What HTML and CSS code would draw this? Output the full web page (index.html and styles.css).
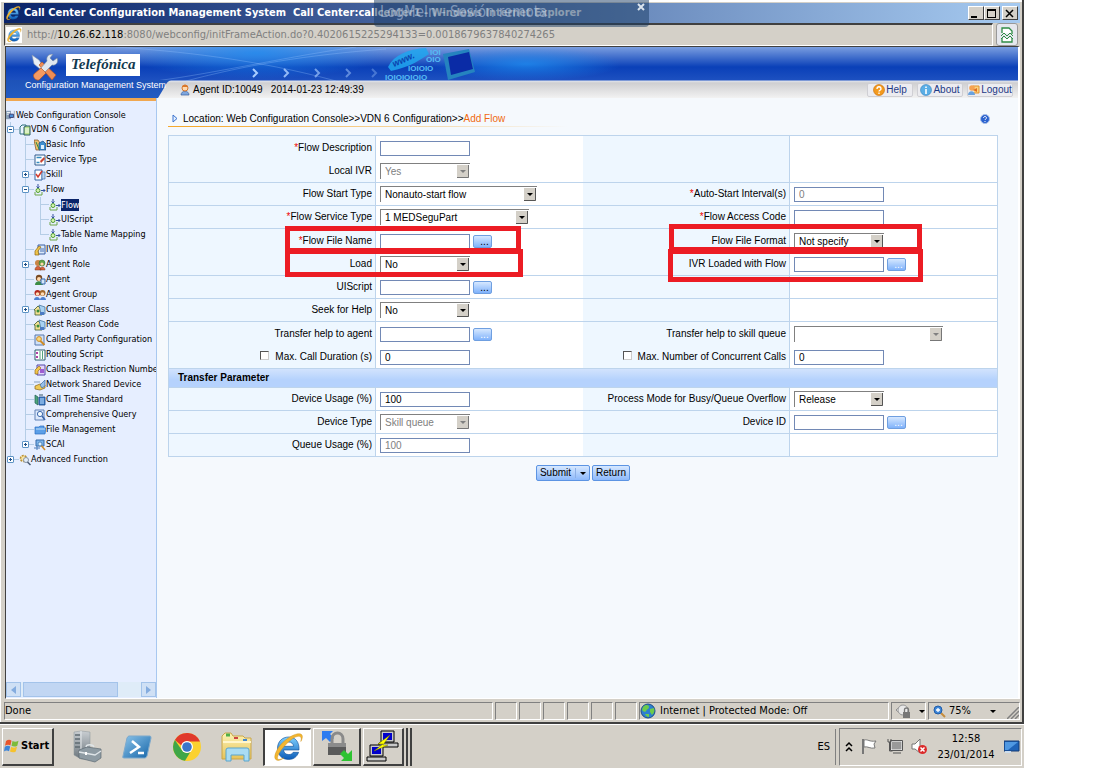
FILE: index.html
```html
<!DOCTYPE html>
<html lang="en">
<head>
<meta charset="utf-8">
<title>Call Center Configuration Management System</title>
<link rel="stylesheet" href="styles.css">
</head>
<body>
<svg class="defs" aria-hidden="true">
  <defs>
    <linearGradient id="gBlue" x1="0" y1="0" x2="0" y2="1"><stop offset="0" stop-color="#7fd0ff"/><stop offset="1" stop-color="#0b5cb8"/></linearGradient>
    <linearGradient id="gYellow" x1="0" y1="0" x2="0" y2="1"><stop offset="0" stop-color="#fdf3b4"/><stop offset="1" stop-color="#e6c35a"/></linearGradient>
    <linearGradient id="gPs" x1="0" y1="0" x2="1" y2="1"><stop offset="0" stop-color="#8cc4ea"/><stop offset="1" stop-color="#1565a8"/></linearGradient>
    <linearGradient id="gGrey" x1="0" y1="0" x2="0" y2="1"><stop offset="0" stop-color="#c9ced2"/><stop offset="1" stop-color="#6b757c"/></linearGradient>
  </defs>
  <symbol id="ie" viewBox="0 0 32 32"><path d="M27 19H11.500c.4 3 2.500 4.600 5.300 4.600 2 0 3.500-.8 4.400-2.300h5.400C25 26 21.400 28.500 16.600 28.500 10 28.500 5.500 24 5.500 17.300S10.200 6 16.700 6 27.400 10.600 27 19zM11.600 15.300h10c-.4-2.700-2.200-4.300-4.900-4.300s-4.600 1.600-5.100 4.300z" fill="url(#gBlue)" stroke="#0a4a94" stroke-width=".6"/><path d="M4.500 29C0 27 5 16 13 9.500 20 3.500 28 1 30 4c1 1.700 0 4.500-1.200 6.500.6-2.500.7-4.300-.8-5-3-1.300-9 2.500-14 8C7.500 20 4 27 6 28.200c1.300.7 3.500 0 6-1.400C9 29 6.300 30 4.500 29z" fill="#f2b632" stroke="#c98a12" stroke-width=".4"/></symbol>
  <symbol id="t-site" viewBox="0 0 12 12"><path d="M0 1h6v10H0z" fill="#8aa0b8"/><path d="M1 3h4M1 5h4" stroke="#fff"/><path d="M4 5h5v4H4z" fill="#4d8fd6" stroke="#336"/><path d="M10 1v9" stroke="#9ab"/></symbol>
  <symbol id="t-vdn" viewBox="0 0 12 12"><path d="M1 3l2-2h4v9H1z" fill="#e9f4ff" stroke="#2d6f7c"/><path d="M5 3l2-1h4v9H5z" fill="#b8e08a" stroke="#2c5a66"/><path d="M7 4v5M9 4v5" stroke="#fff"/></symbol>
  <symbol id="t-basic" viewBox="0 0 12 12"><path d="M0 1h4l2 3v7H2z" fill="#eec06b" stroke="#7d4d22" stroke-width=".7"/><path d="M5 4l4-2 3 3v6H5z" fill="#3f8fcf" stroke="#174b7c" stroke-width=".7"/><path d="M2 3l3 7" stroke="#2c8b48"/><path d="M7 6h3v4H7z" fill="#dff2ff"/></symbol>
  <symbol id="t-service" viewBox="0 0 12 12"><path d="M1 1h10v10H1z" fill="#fff" stroke="#2e5b8e"/><path d="M2.500 3.500h5M2.500 8.500h3" stroke="#358bc0" stroke-width="1.500"/><path d="M6 7l4-4 1 2-4 4z" fill="#c84432"/></symbol>
  <symbol id="t-skill" viewBox="0 0 12 12"><path d="M1 1h7v10H1z" fill="#fff" stroke="#3465a4"/><path d="M8 3h3v7H8z" fill="#bcd4ee" stroke="#3465a4" stroke-width=".6"/><path d="M2 5l2 3 4-6" stroke="#d13c2e" stroke-width="1.500" fill="none"/></symbol>
  <symbol id="t-flow" viewBox="0 0 12 12"><path d="M4 0v4M2.500 2.500L4 4l1.500-1.500M7 6.500h4M9.500 5l1.500 1.500L9.500 8" stroke="#34519e" fill="none"/><circle cx="4" cy="6.500" r="2" fill="#d7f3b0" stroke="#4f9b32"/><path d="M1 8v3h7V8" fill="none" stroke="#6da548"/></symbol>
  <symbol id="t-ivr" viewBox="0 0 12 12"><path d="M4 1h7v9H4z" fill="#dbe9fa" stroke="#3a5fa3"/><path d="M1 11V7l4-5 2 1-3 4 1 4z" fill="#f0c54b" stroke="#8d6516" stroke-width=".7"/><path d="M6 5h4M6 7h4" stroke="#4a70b4"/></symbol>
  <symbol id="t-role" viewBox="0 0 12 12"><circle cx="4" cy="4" r="3" fill="#c98546"/><circle cx="8" cy="4" r="3" fill="#62a347" stroke="#37662a" stroke-width=".5"/><circle cx="8" cy="5" r="1.600" fill="#ffd8ad"/><path d="M1 11c0-5 6-5 6 0zM6 11c0-4 5-4 5 0z" fill="#d9613c" stroke="#7d3a1f" stroke-width=".5"/></symbol>
  <symbol id="t-agent" viewBox="0 0 12 12"><circle cx="5" cy="4" r="3.200" fill="#7a4a23"/><circle cx="5" cy="5" r="2" fill="#ffd8ad"/><path d="M1 11c0-5 7-5 8 0z" fill="#3d8d45"/><path d="M7 5h4v5H7z" fill="#d4e6fa" stroke="#3568ad"/></symbol>
  <symbol id="t-group" viewBox="0 0 12 12"><circle cx="3.500" cy="4" r="3" fill="#b2271f"/><circle cx="8.500" cy="4" r="3" fill="#a5682b"/><circle cx="3.500" cy="5" r="1.800" fill="#ffdcb6"/><circle cx="8.500" cy="5" r="1.800" fill="#ffdcb6"/><path d="M0 11c0-4 6-4 6 0zM6 11c0-4 6-4 6 0z" fill="#4c7fd2"/></symbol>
  <symbol id="t-cust" viewBox="0 0 12 12"><path d="M0 6l4-4 4 4v5H1V6z" fill="#f2df91" stroke="#3d5a2d" stroke-width=".8"/><path d="M5 1l6 2v7H7z" fill="#a9d2f2" stroke="#386894" stroke-width=".7"/><circle cx="4" cy="7" r="1.500" fill="#3a8d3c"/><path d="M6 8h4v3H6z" fill="#4b7ac4"/></symbol>
  <symbol id="t-party" viewBox="0 0 12 12"><path d="M1 1h9v10H1z" fill="#cfe1f8" stroke="#5979ad"/><path d="M10.500 11L6 6.500" stroke="#cf8b26" stroke-width="2"/><circle cx="5" cy="5" r="2.400" fill="#f9d97c" stroke="#cf8b26"/></symbol>
  <symbol id="t-routing" viewBox="0 0 12 12"><path d="M1 1h10v10H1z" fill="#fff" stroke="#2f5f6f"/><path d="M3 3v2M3 7v2" stroke="#b440a5" stroke-width="2"/><path d="M6 2v8M8.500 2v8" stroke="#56a27d"/></symbol>
  <symbol id="t-callback" viewBox="0 0 12 12"><path d="M3 1h8v10H3z" fill="#e3d5fa" stroke="#5448a8"/><path d="M1 10V6l4-4 2 2-3 3v3z" fill="#f3c64a" stroke="#856017" stroke-width=".6"/><path d="M6 6h4M6 8h4" stroke="#8936c4" stroke-width="1.500"/></symbol>
  <symbol id="t-network" viewBox="0 0 12 12"><path d="M1 7l5-2 5 1v3l-5 2-5-1z" fill="#f0c955" stroke="#8b6518" stroke-width=".7"/><path d="M6 6l5-5v6L8 9z" fill="#98c1ea" stroke="#3f6ba3" stroke-width=".7"/><path d="M0 3h6" stroke="#87a0bf"/></symbol>
  <symbol id="t-time" viewBox="0 0 12 12"><path d="M1 1l3 2v8l-3-2z" fill="#4fa67d" stroke="#1c5e52" stroke-width=".7"/><path d="M5 3h6v8H5z" fill="#3f83ce" stroke="#1b4583" stroke-width=".8"/><path d="M6 5h4M6 7h4M6 9h4" stroke="#dceeff" stroke-width=".8"/><path d="M5 1h4" stroke="#356"/></symbol>
  <symbol id="t-query" viewBox="0 0 12 12"><path d="M1 1h9v10H1z" fill="#dce8fb" stroke="#6181b5"/><circle cx="6" cy="5" r="2.600" fill="#f4fbff" stroke="#3e68ab"/><path d="M8 7l3 4" stroke="#3e68ab" stroke-width="1.500"/></symbol>
  <symbol id="t-folder" viewBox="0 0 12 12"><path d="M1 3h4l1-1h4v2h2l-1 6H1z" fill="#5b9fe8" stroke="#2b6ebf" stroke-width=".7"/><path d="M2 5h9" stroke="#c5e1fb"/></symbol>
  <symbol id="t-scai" viewBox="0 0 12 12"><path d="M2 1h8v6H2z" fill="#7db4ea" stroke="#376ba8"/><path d="M0 9h6M3 7v4" stroke="#4a7dba"/><path d="M6 5l5 6" stroke="#cf8b2c" stroke-width="1.500"/><circle cx="6" cy="5" r="2" fill="#d7efff" stroke="#376ba8" stroke-width=".7"/></symbol>
  <symbol id="t-adv" viewBox="0 0 12 12"><circle cx="4.500" cy="4.500" r="3" fill="#fae6a5" stroke="#bb9136" stroke-width="1.500" stroke-dasharray="2 1"/><circle cx="7" cy="6" r="2.500" fill="#e4edf8" stroke="#8593a6"/><path d="M8.500 8l3 3" stroke="#4a5b73" stroke-width="1.500"/></symbol>
</svg>

<div class="desktop">
  <section class="window">
    <div class="titlebar">
      <svg class="i16"><use href="#ie"/></svg>
      <h1 class="title">Call Center Configuration Management System&nbsp; Call Center:callcenter1 - Windows Internet Explorer</h1>
      <div class="winbtns">
        <button class="wb" aria-label="Minimize"><svg width="13" height="11"><path d="M2 8h6v2H2z"/></svg></button>
        <button class="wb" aria-label="Maximize"><svg width="13" height="11"><path d="M2 1h9v9H2zM3 3v6h7V3z" fill-rule="evenodd"/></svg></button>
        <button class="wb close" aria-label="Close"><svg width="13" height="11"><path d="M3 2l7 7M10 2L3 9" stroke="#000" stroke-width="1.500"/></svg></button>
      </div>
      <div class="remote"><span>LogMeIn - Sesión remota</span><button class="remote-x" aria-label="Close session bar"><svg width="8" height="8"><path d="M1 1l6 6M7 1L1 7" stroke="#dbe4ee" stroke-width="2"/></svg></button></div>
    </div>
    <div class="address">
      <div class="url"><svg class="i16 page-ic"><use href="#ie"/></svg><span>http://<b>10.26.62.118</b>:8080/webconfig/initFrameAction.do?0.4020615225294133=0.0018679637840274265</span></div>
      <button class="compat" aria-label="Compatibility view"><svg width="14" height="16" viewBox="0 0 14 16"><path d="M2 6V1h7l3 3v3M2 11v4h10v-4" fill="#fff" stroke="#2f8c46" stroke-width="1.300"/><path d="M1 9l3-3 3 3 3-3 3 3M1 12l3-3 3 3 3-3 3 3" fill="none" stroke="#2f8c46"/></svg></button>
    </div>

    <div class="frame">
      <header class="top">
        <svg class="art" width="620" height="51" viewBox="0 0 620 51" aria-hidden="true">
          <defs>
            <radialGradient id="glow"><stop offset="0" stop-color="#1f8cf0" stop-opacity=".8"/><stop offset="1" stop-color="#1f8cf0" stop-opacity="0"/></radialGradient>
            <linearGradient id="side" x1="0" y1="0" x2="0" y2="1"><stop offset="0" stop-color="#1d52b8"/><stop offset="1" stop-color="#245cc2"/></linearGradient>
          </defs>
          <ellipse cx="520" cy="17" rx="95" ry="17" fill="url(#glow)"/>
          <ellipse cx="250" cy="6" rx="130" ry="26" fill="url(#glow)"/>
          <path d="M110 0C170 4 250 12 330 34M150 34C210 26 290 8 350 0M180 34C240 18 300 8 380 2" stroke="#9cc8ff" stroke-opacity=".3" fill="none"/>
          <path d="M0 33h165q-4 1-7 8l-6 10H0z" fill="url(#side)"/>
          <g fill="none" stroke="#a9cdff" stroke-width="2"><path d="M247 22l4 4-4 4"/><path d="M278 22l4 4-4 4" opacity=".85"/><path d="M309 22l4 4-4 4" opacity=".65"/><path d="M340 22l4 4-4 4" opacity=".5"/><path d="M366 22l4 4-4 4" opacity=".35"/></g>
          <path d="M382 20C388 8 402 2 420 1l3 6c-8 5-18 13-38 17z" fill="#20a6ee" opacity=".85"/>
          <text x="388" y="20" class="art-www" transform="rotate(-24 388 20)">www.</text>
          <g class="art-bits"><text x="424" y="8">IOI</text><text x="420" y="15">OIO</text><text x="402" y="24">IOIOIO</text><text x="379" y="33">IOIOIOIOIO</text></g>
          <path d="M437 7l26-5 6 23-27 8z" fill="#2583bf"/><path d="M442 10l21-5 4 17-22 6z" fill="#0a2ba6"/>
        </svg>
        <div class="brand">
          <div class="brand-row">
            <svg width="29" height="27" viewBox="0 0 29 27"><path d="M2 1l7 5 4 6-3 3-6-5z" fill="#e8eef6" stroke="#8194ac" stroke-width=".6"/><path d="M9 11l3-3 14 13-4 5z" fill="#ef8d55" stroke="#b65425" stroke-width=".7"/><path d="M27 4l-4 3-3-3 3-4c-5 0-7 3-6 7l-7 8 4 4 8-8c4 1 7-3 5-7z" fill="#dfe7f0" stroke="#71869f" stroke-width=".6"/><path d="M11 14l5 5-7 7c-3 1-7-3-5-6z" fill="#f49a62" stroke="#b65425" stroke-width=".7"/></svg>
            <span class="logo">Telefónica</span>
          </div>
          <p class="brand-sub">Configuration Management System</p>
        </div>
        <div class="infobar">
          <svg width="10" height="12" viewBox="0 0 10 12"><path d="M1 11c0-5 8-5 8 0z" fill="#7ea6de" stroke="#3b62a0" stroke-width=".7"/><circle cx="5" cy="4" r="3" fill="#ffd9ad" stroke="#d9782a"/><path d="M2 3c1-3 5-3 6 0z" fill="#d9782a"/></svg>
          <span class="agent">Agent ID:10049&nbsp;&nbsp; 2014-01-23 12:49:39</span>
          <nav class="links">
            <a href="#help"><svg width="12" height="12"><circle cx="6" cy="6" r="5.500" fill="#f39a1e" stroke="#c76d08" stroke-width=".6"/><path d="M4 5c0-3 4-3 4 0 0 1.500-2 1-2 2.500M6 8.500V10" fill="none" stroke="#fff" stroke-width="1.300"/></svg>Help</a>
            <a href="#about"><svg width="12" height="12"><circle cx="6" cy="6" r="5.500" fill="#5aaee6" stroke="#3b84bd" stroke-width=".6"/><path d="M6 2.500v1.500M6 5v5" stroke="#fff" stroke-width="1.600"/></svg>About</a>
            <a href="#logout"><svg width="12" height="12"><path d="M5 2h6v7H6" fill="#fbd27c" stroke="#e3922c"/><circle cx="4" cy="4" r="2.800" fill="#f6a352"/><path d="M0 11c0-5 7-5 7 0z" fill="#6aa2df"/><path d="M5 6l4-2v4z" fill="#e06d22"/></svg>Logout</a>
          </nav>
        </div>
      </header>

      <div class="panes">
        <aside class="side">
          <div class="tree-view">
            <div class="root"><svg class="ti"><use href="#t-site"/></svg>Web Configuration Console</div>
            <ul class="tree">
              <li><button class="tg minus" aria-label="Collapse"></button><a href="#"><svg class="ti"><use href="#t-vdn"/></svg>VDN 6 Configuration</a>
                <ul>
                  <li><a href="#"><svg class="ti"><use href="#t-basic"/></svg>Basic Info</a></li>
                  <li><a href="#"><svg class="ti"><use href="#t-service"/></svg>Service Type</a></li>
                  <li><button class="tg" aria-label="Expand"></button><a href="#"><svg class="ti"><use href="#t-skill"/></svg>Skill</a></li>
                  <li><button class="tg minus" aria-label="Collapse"></button><a href="#"><svg class="ti"><use href="#t-flow"/></svg>Flow</a>
                    <ul>
                      <li><a href="#"><svg class="ti"><use href="#t-flow"/></svg><span class="sel">Flow</span></a></li>
                      <li><a href="#"><svg class="ti"><use href="#t-flow"/></svg>UIScript</a></li>
                      <li><a href="#"><svg class="ti"><use href="#t-flow"/></svg>Table Name Mapping</a></li>
                    </ul>
                  </li>
                  <li><a href="#"><svg class="ti"><use href="#t-ivr"/></svg>IVR Info</a></li>
                  <li><button class="tg" aria-label="Expand"></button><a href="#"><svg class="ti"><use href="#t-role"/></svg>Agent Role</a></li>
                  <li><a href="#"><svg class="ti"><use href="#t-agent"/></svg>Agent</a></li>
                  <li><a href="#"><svg class="ti"><use href="#t-group"/></svg>Agent Group</a></li>
                  <li><button class="tg" aria-label="Expand"></button><a href="#"><svg class="ti"><use href="#t-cust"/></svg>Customer Class</a></li>
                  <li><a href="#"><svg class="ti"><use href="#t-cust"/></svg>Rest Reason Code</a></li>
                  <li><a href="#"><svg class="ti"><use href="#t-party"/></svg>Called Party Configuration</a></li>
                  <li><a href="#"><svg class="ti"><use href="#t-routing"/></svg>Routing Script</a></li>
                  <li><a href="#"><svg class="ti"><use href="#t-callback"/></svg>Callback Restriction Number</a></li>
                  <li><a href="#"><svg class="ti"><use href="#t-network"/></svg>Network Shared Device</a></li>
                  <li><a href="#"><svg class="ti"><use href="#t-time"/></svg>Call Time Standard</a></li>
                  <li><a href="#"><svg class="ti"><use href="#t-query"/></svg>Comprehensive Query</a></li>
                  <li><a href="#"><svg class="ti"><use href="#t-folder"/></svg>File Management</a></li>
                  <li><button class="tg" aria-label="Expand"></button><a href="#"><svg class="ti"><use href="#t-scai"/></svg>SCAI</a></li>
                </ul>
              </li>
              <li><button class="tg" aria-label="Expand"></button><a href="#"><svg class="ti"><use href="#t-adv"/></svg>Advanced Function</a></li>
            </ul>
          </div>
          <div class="hscroll">
            <button class="sb" aria-label="Scroll left"><svg width="5" height="8"><path d="M5 0v8L0 4z" fill="#84acdf"/></svg></button>
            <div class="track"><div class="thumb"></div></div>
            <button class="sb" aria-label="Scroll right"><svg width="5" height="8"><path d="M0 0v8l5-4z" fill="#84acdf"/></svg></button>
          </div>
        </aside>

        <main class="main">
          <div class="crumb">
            <svg width="6" height="9"><path d="M1 1v7l4-3.500z" fill="#e4f0ff" stroke="#3a73cf"/></svg>
            <span>Location: Web Configuration Console&gt;&gt;VDN 6 Configuration&gt;&gt;<em>Add Flow</em></span>
            <button class="helpbtn" aria-label="Help"><svg width="10" height="10"><circle cx="5" cy="5" r="4.500" fill="#2b62cf" stroke="#a7bfe8"/><path d="M3.500 4c0-2 3-2 3 0 0 1-1.500 1-1.500 2M5 7v1" fill="none" stroke="#fff"/></svg></button>
          </div>
          <form onsubmit="return false">
            <table class="form">
              <tr class="open"><th><label for="fd"><i>*</i>Flow Description</label></th><td><input type="text" id="fd"></td><th></th><td></td></tr>
              <tr><th><label for="li">Local IVR</label></th><td><select id="li" disabled><option>Yes</option></select></td><th></th><td></td></tr>
              <tr><th><label for="st">Flow Start Type</label></th><td><select id="st" class="w157"><option>Nonauto-start flow</option></select></td><th><label for="as"><i>*</i>Auto-Start Interval(s)</label></th><td><input type="text" id="as" value="0" disabled></td></tr>
              <tr><th><label for="sv"><i>*</i>Flow Service Type</label></th><td><select id="sv" class="w149"><option>1 MEDSeguPart</option></select></td><th><label for="ac"><i>*</i>Flow Access Code</label></th><td><input type="text" id="ac"></td></tr>
              <tr class="open"><th><label for="fn"><i>*</i>Flow File Name</label></th><td><input type="text" id="fn"><button class="dots">...</button><span class="mark m1"></span></td><th><label for="ff">Flow File Format</label></th><td><select id="ff"><option>Not specify</option></select><span class="mark m3"></span></td></tr>
              <tr><th><label for="ld">Load</label></th><td><select id="ld"><option>No</option></select><span class="mark m2"></span></td><th><label for="il">IVR Loaded with Flow</label></th><td><input type="text" id="il"><button class="dots" disabled>...</button><span class="mark m4"></span></td></tr>
              <tr><th><label for="ui">UIScript</label></th><td><input type="text" id="ui"><button class="dots">...</button></td><th></th><td></td></tr>
              <tr><th><label for="sh">Seek for Help</label></th><td><select id="sh"><option>No</option></select></td><th></th><td></td></tr>
              <tr class="open"><th><label for="ta">Transfer help to agent</label></th><td><input type="text" id="ta"><button class="dots" disabled>...</button></td><th><label for="ts">Transfer help to skill queue</label></th><td><select id="ts" class="w149" disabled><option></option></select></td></tr>
              <tr><th><label><input type="checkbox">Max. Call Duration (s)</label></th><td><input type="text" value="0" aria-label="Max. Call Duration (s)"></td><th><label><input type="checkbox">Max. Number of Concurrent Calls</label></th><td><input type="text" value="0" aria-label="Max. Number of Concurrent Calls"></td></tr>
              <tr class="section"><th colspan="4">Transfer Parameter</th></tr>
              <tr><th><label for="du">Device Usage (%)</label></th><td><input type="text" id="du" value="100"></td><th><label for="pm">Process Mode for Busy/Queue Overflow</label></th><td><select id="pm"><option>Release</option></select></td></tr>
              <tr><th><label for="dt">Device Type</label></th><td><select id="dt" disabled><option>Skill queue</option></select></td><th><label for="di">Device ID</label></th><td><input type="text" id="di"><button class="dots" disabled>...</button></td></tr>
              <tr><th><label for="qu">Queue Usage (%)</label></th><td><input type="text" id="qu" value="100" disabled></td><th></th><td></td></tr>
            </table>
            <div class="actions">
              <button class="act">Submit<span class="drop"></span></button>
              <button class="act">Return</button>
            </div>
          </form>
        </main>
      </div>
    </div>

    <footer class="status">
      <span class="cell grow">Done</span>
      <span class="cell s"></span><span class="cell s"></span><span class="cell s"></span><span class="cell s"></span><span class="cell s"></span><span class="cell s"></span>
      <span class="cell zone"><svg width="16" height="16"><circle cx="8" cy="8" r="7" fill="#2c7fd0" stroke="#1c4d86"/><path d="M3 4c3-3 6-2 6 0S7 6 6 8 3 8 2 7zM10 6l4-1c1 3 0 5-2 7l-2-3zM5 11l4 0 0 3c-2 0-3-1-4-3z" fill="#6dcb4b"/></svg>Internet | Protected Mode: Off</span>
      <span class="cell lockc"><svg width="16" height="14"><path d="M1 6l6-5v10z" fill="#fff" stroke="#8b8b8b"/><circle cx="8" cy="6" r="5" fill="#e8e8e8" stroke="#999"/><path d="M8 8h7v6H8z" fill="#777"/><path d="M9.500 8V5.500c0-2 4-2 4 0V8" fill="none" stroke="#777" stroke-width="1.300"/></svg><span class="car"></span></span>
      <span class="cell zoomc"><svg width="13" height="13"><path d="M8 8l4 4" stroke="#c58c3c" stroke-width="2"/><circle cx="5" cy="5" r="4" fill="#3f87d9" stroke="#1f5ca8"/><path d="M5 3v4M3 5h4" stroke="#fff" stroke-width="1.300"/></svg><span>75%</span><span class="car end"></span><svg class="grip" width="12" height="12"><path d="M0 12L12 0M4 12l8-8M8 12l4-4" stroke="#808080" stroke-width="1.500"/></svg></span>
    </footer>
  </section>

  <div class="taskbar">
    <button class="start"><svg width="16" height="16" viewBox="0 0 16 16"><path d="M2 3c2-1.500 4-1.500 5.500-.3L6.400 7.500C5 6.500 3 6.500 1 7.700z" fill="#e8552c"/><path d="M8.500 3c2 1.200 4 1 6-.2l-1.200 4.900c-2 1.200-4 1-5.800 0z" fill="#7dbb3a"/><path d="M.8 8.800c2-1.200 4-1.200 5.400-.2L5 13.200c-1.500-1-3.500-1-5 .2z" fill="#3d85d8"/><path d="M7.200 8.800c2 1.200 4 1 5.800 0l-1.200 4.700c-2 1.200-4 1-5.800 0z" fill="#f6c22d"/></svg>Start</button>
    <div class="launch">
      <button class="q" aria-label="Server Manager"><svg width="30" height="34" viewBox="0 0 30 34"><path d="M2 2l7-1 9 1v27H9l-7-4z" fill="url(#gGrey)" stroke="#8b959b" stroke-width=".5"/><path d="M9 1v28" stroke="#e6eaec"/><path d="M3 5h5M3 9h5M3 13h5M3 17h5" stroke="#5f6b72" stroke-width="1.500"/><path d="M7 20l8-3 14 2v9l-6 4-16-4z" fill="#8e9ba3" stroke="#5f6c74" stroke-width=".7"/><path d="M7 22l16 3 6-4M14 17c0-3 7-3 8 0" fill="none" stroke="#dfe5e8" stroke-width="1.300"/><path d="M13 22h2v3h-2z" fill="#fff"/></svg></button>
      <button class="q" aria-label="PowerShell"><svg width="30" height="26" viewBox="0 0 30 26"><path d="M7 2h21q1 0 1 2l-4 18q-1 2-2 2H2q-2 0-1-2L5 4q1-2 2-2z" fill="url(#gPs)" stroke="#7da9cc"/><path d="M10 7l7 6-9 6M16 19h6" fill="none" stroke="#fff" stroke-width="2.500"/></svg></button>
      <button class="q" aria-label="Chrome"><svg width="30" height="30" viewBox="0 0 30 30"><circle cx="15" cy="15" r="14" fill="#fbd12f"/><path d="M2.900 8A14 14 0 0 1 28 9.500H15a6 6 0 0 0-5.500 4z" fill="#e0392c"/><path d="M2.900 8A14 14 0 0 0 13 28.800l5.500-9A6 6 0 0 1 9.800 18z" fill="#3fa648"/><circle cx="15" cy="15" r="6" fill="#fff"/><circle cx="15" cy="15" r="4.800" fill="#3a76c9"/></svg></button>
      <button class="q" aria-label="Explorer"><svg width="34" height="30" viewBox="0 0 34 30"><path d="M2 4l3-3h6l2 3h10l2 2h6v21H2z" fill="url(#gYellow)" stroke="#c9a64a"/><path d="M6 3h4" stroke="#4fb04a" stroke-width="3"/><path d="M14 6h4" stroke="#c44" stroke-width="2"/><path d="M23 8h4" stroke="#48c" stroke-width="2"/><path d="M3 10h28" stroke="#fff6cc" stroke-width="2"/><path d="M6 29V18q0-2 2-2h19q2 0 2 2v11h-5v-6H11v6z" fill="#a9dcf3" stroke="#5ba5cc"/></svg></button>
      <button class="q on" aria-label="Internet Explorer"><svg width="32" height="32"><use href="#ie"/></svg></button>
      <button class="q up" aria-label="LogMeIn"><svg width="32" height="32" viewBox="0 0 32 32"><path d="M1 1h11L9 4l4 4-4 4-4-4-4 3z" fill="#2d7cf0"/><path d="M11 14V9c0-8 11-8 11 0v5" fill="none" stroke="#8a8a8a" stroke-width="3"/><path d="M7 13h18v12H7z" fill="#5a5a5a"/><path d="M7 13h18v4H7z" fill="#8b8b8b"/><path d="M31 31H20l3-3-4-4 4-4 4 4 4-4z" fill="#2ec332"/></svg></button>
      <button class="q up putty" aria-label="PuTTY"><svg width="34" height="34" viewBox="0 0 34 34"><g stroke="#000" fill="#c9c9c9"><path d="M15 2h13v11H15zM13 14h19v4H13z"/><path d="M4 16h13v11H4zM1 28h19v4H1z"/></g><path d="M17 4h9v7h-9zM6 18h9v7H6z" fill="#00c"/><path d="M24 6L12 15h5l-9 7 14-6h-5z" fill="#ff0" stroke="#770" stroke-width=".5"/></svg></button>
      <span class="stack"></span><span class="stack"></span>
    </div>
    <span class="lang">ES</span>
    <div class="tray">
      <svg width="8" height="12"><path d="M1 5l3-3 3 3M1 10l3-3 3 3" fill="none" stroke="#000" stroke-width="1.500"/></svg>
      <svg width="17" height="17"><path d="M2 1v15" stroke="#777" stroke-width="2"/><path d="M3 2c4-1 5 2 12 1l-2 3 1 4c-5 1-7-2-11-1z" fill="#fff" stroke="#777"/></svg>
      <svg width="17" height="17"><path d="M5 3h11v9H5z" fill="#999" stroke="#fff"/><path d="M4.500 2.500h12v10h-12zM7 15h8M2 1v3h3V1M3.500 4v9h3" fill="none" stroke="#555"/></svg>
      <svg width="17" height="17"><path d="M1 6h3l5-5v14l-5-4H1z" fill="#fff" stroke="#777"/><circle cx="11.500" cy="11.500" r="4.500" fill="#db2a2a"/><path d="M9.500 9.500l4 4M13.500 9.500l-4 4" stroke="#fff" stroke-width="1.500"/></svg>
      <div class="clock"><span>12:58</span><span>23/01/2014</span></div>
      <svg width="16" height="14"><path d="M0 1h15v10H0z" fill="#1f63b8" stroke="#123b75"/><path d="M1 2h13L4 10H1z" fill="#4f98e2"/><path d="M1 12h6" stroke="#cde" stroke-width="2"/></svg>
    </div>
  </div>
</div>
</body>
</html>
```
FILE: styles.css
```css
* { box-sizing: border-box; }
body { margin: 0; background: #fff; color: #000; font: 10px/12px "Liberation Sans", Arial, sans-serif; }
button { font: inherit; color: inherit; margin: 0; padding: 0; border: 0; background: none; }
a { color: inherit; text-decoration: none; }
svg { display: block; flex: none; }
.defs { position: absolute; width: 0; height: 0; }
.i16 { width: 16px; height: 16px; }

.desktop { min-height: 100vh; margin-right: 69px; display: flex; flex-direction: column; background: #d4d0c8; font-family: "DejaVu Sans Condensed", "DejaVu Sans", sans-serif; }
.window { flex: 1; display: flex; flex-direction: column; padding: 1px 2px 2px 4px; border: solid #404040; border-width: 0 2px 2px 0; box-shadow: inset 1px 2px 0 #fff; }

.titlebar { position: relative; display: flex; align-items: center; gap: 3px; height: 20px; margin-top: 2px; padding: 0 2px 0 1px; background: linear-gradient(90deg, #0a246a, #a6caf0); color: #fff; }
.title { flex: 1; margin: 0; font-size: 11px; line-height: 20px; font-weight: bold; white-space: nowrap; }
.winbtns { display: flex; }
.wb { width: 16px; height: 14px; background: #d4d0c8; border: 1px solid; border-color: #fff #404040 #404040 #fff; }
.wb.close { margin-left: 2px; }
.remote { position: absolute; top: -3px; left: 370px; width: 275px; height: 27px; padding: 0 4px 0 6px; display: flex; justify-content: space-between; border-radius: 0 0 4px 4px; background: rgba(25, 60, 100, .5); color: rgba(205, 220, 240, .5); font-size: 15px; line-height: 25px; }
.remote-x { height: 14px; }

.address { display: flex; height: 23px; gap: 3px; }
.url { flex: 1; display: flex; align-items: center; gap: 5px; padding-left: 1px; border: solid; border-width: 2px 1px 1px; border-color: #404040 #fff #fff #404040; color: #808080; font-size: 11px; white-space: nowrap; }
.url b { color: #000; font-weight: normal; }
.page-ic { background: #fff; }
.compat { width: 22px; display: grid; place-items: center; margin-right: 2px; border: 1px solid #999; border-radius: 3px; background: #e6e8ee; }

.frame { flex: 1; display: flex; flex-direction: column; margin: 0 0 0 1px; border: solid; border-width: 1px 2px 1px 1px; border-color: #404040 #fff #fff #404040; background: #f5f9fd; font-family: "Liberation Sans", Arial, sans-serif; }
.top { position: relative; display: flex; align-items: flex-end; height: 51px; background: linear-gradient(#7a9ee0, #0a40b8 20px, #1d50c0 33px, #dfe3ec 34px, #cfcfd1 36px, #f2f2f2 51px); }
.art { position: absolute; left: 0; top: 0; }
.art-www { font: italic bold 9px "Liberation Sans", sans-serif; fill: #0b43ae; }
.art-bits { font: bold 8px "Liberation Sans", sans-serif; fill: #56bdf5; }
.brand { position: relative; width: 165px; height: 51px; padding: 7px 0 0 19px; color: #fff; }
.brand-row { display: flex; gap: 7px; height: 26px; margin-left: 5px; }
.logo { height: 22px; padding: 0 5px; background: #fff; color: #10384f; font: italic bold 15px/20px "Liberation Serif", serif; }
.brand-sub { margin: 0; font: 9px/11px "Liberation Sans", Arial, sans-serif; white-space: nowrap; }
.infobar { position: relative; flex: 1; display: flex; align-items: center; gap: 3px; height: 17px; padding: 0 5px 0 9px; white-space: nowrap; }
.links { display: flex; gap: 4px; margin-left: auto; color: #1e3a86; }
.links a { display: flex; align-items: center; justify-content: center; gap: 1px; width: 46px; height: 14px; border: 1px solid #cfcfd4; border-radius: 2px; background: #ececf0; }

.panes { flex: 1; display: flex; }
.side { width: 151px; display: flex; flex-direction: column; overflow: hidden; border-right: 1px solid #a8c8f0; background: #e6eeff; font-family: "DejaVu Sans Condensed", "DejaVu Sans", sans-serif; font-size: 9px; }
.tree-view { flex: 1; padding-top: 7px; border-top: 3px solid #f0a750; white-space: nowrap; }
.root, .tree a { display: flex; align-items: center; height: 15px; line-height: 15px; }
.root { height: 14px; }
.root .ti { width: 10px; }
.ti { width: 12px; height: 12px; }
.tree, .tree ul { list-style: none; margin: 0; padding: 0; }
.tree ul { margin-left: 2px; }
.tree li { position: relative; padding-left: 13px; }
.tree li::before { content: ""; position: absolute; left: 4px; top: 0; bottom: 0; border-left: 1px solid #b5cde6; }
.tree li:last-child::before { bottom: auto; height: 8px; }
.tree li::after { content: ""; position: absolute; left: 5px; top: 7px; width: 8px; border-top: 1px solid #b5cde6; }
.tg { position: absolute; z-index: 1; left: 1px; top: 4px; width: 7px; height: 7px; border: 1px solid #5d93c4; border-radius: 1px; background: linear-gradient(#1d4c86, #1d4c86) center / 3px 1px no-repeat, linear-gradient(#1d4c86, #1d4c86) center / 1px 3px no-repeat, #fff; }
.tg.minus { background: linear-gradient(#1d4c86, #1d4c86) center / 3px 1px no-repeat, #fff; }
.sel { height: 12px; line-height: 12px; background: #0a246a; color: #fff; }
.hscroll { display: flex; gap: 2px; height: 15px; margin-bottom: 1px; background: #dfecf8; }
.sb { width: 15px; display: grid; place-items: center; border: 1px solid #a3c3ea; background: #cfe0f5; }
.track { flex: 1; }
.thumb { width: 82%; height: 15px; border: 1px solid #a3c3ea; background: #c1d6f3; }

.main { flex: 1; padding: 12px 20px 12px 11px; }
.crumb { display: flex; align-items: center; gap: 5px; height: 17px; margin-bottom: 8px; padding: 0 8px 0 4px; background: linear-gradient(90deg, #f5a92e 30px, #f5a92e00 400px) bottom / 100% 1px no-repeat; }
.crumb em { color: #f06a10; font-style: normal; }
.helpbtn { margin-left: auto; }

.form { width: 100%; table-layout: fixed; border-collapse: separate; border-spacing: 0; border: solid #bdd4ec; border-width: 1px 1px 0; }
.form th, .form td { position: relative; height: 23px; padding: 0; border-bottom: 1px solid #bdd4ec; vertical-align: middle; }
.form th { padding-right: 3px; border-right: 1px solid #bdd4ec; background: #eef7ff; text-align: right; font-weight: normal; white-space: nowrap; }
.form td { padding-left: 4px; background: #fff; }
.form .open th, .form .open td { height: 24px; border-bottom: 0; }
.form .section th { height: 19px; padding: 0 9px; border-right: 0; background: linear-gradient(#d2e3fd, #b5d2fd 60%); text-align: left; font-weight: bold; }
.form i { color: #e00; font-style: normal; }
.form input[type=text] { display: inline-block; vertical-align: middle; width: 90px; height: 15px; padding: 0 4px; border: 1px solid #7289b5; background: #fff; font: inherit; color: #000; }
.form select { appearance: none; display: block; width: 90px; height: 16px; padding: 0 16px 0 4px; border: solid #808080; border-width: 1px 0 0 1px; border-radius: 0; font: inherit; color: #000; opacity: 1; background: url("data:image/svg+xml,%3Csvg xmlns='http://www.w3.org/2000/svg' width='12' height='13'%3E%3Cpath d='M0 0h12v13H0z' fill='%23d4d0c8'/%3E%3Cpath d='M11.500 0v12.500H0' fill='none' stroke='%23555'/%3E%3Cpath d='M3 5h6L6 8z'/%3E%3C/svg%3E") right 1px top 1px no-repeat #fff; }
.form select.w157 { width: 157px; }
.form select.w149 { width: 149px; }
.form select:disabled { color: #808080; background-image: url("data:image/svg+xml,%3Csvg xmlns='http://www.w3.org/2000/svg' width='12' height='13'%3E%3Cpath d='M0 0h12v13H0z' fill='%23d4d0c8'/%3E%3Cpath d='M11.500 0v12.500H0' fill='none' stroke='%23777'/%3E%3Cpath d='M3 5h6L6 8z' fill='%23808080'/%3E%3C/svg%3E"); }
.form input[type=text]:disabled { color: #808080; }
.form input[type=checkbox] { appearance: none; width: 9px; height: 9px; margin: 0 6px 0 0; border: 1px solid; border-color: #555 #ccc #ccc #555; background: #fff; }
.dots { width: 19px; height: 13px; margin-left: 3px; vertical-align: middle; border: 1px solid #6f9fe0; border-radius: 2px; background: linear-gradient(#d6e8ff, #7fb2fb); line-height: 11px; padding-left: 4px; }
.dots:disabled { color: #fff; }
.mark { position: absolute; z-index: 2; border: 5px solid #ec1c24; pointer-events: none; }
.m1 { left: -91px; top: -3px; width: 236px; height: 27px; }
.m2 { left: -91px; top: -4px; width: 238px; height: 28px; }
.m3 { left: -121px; top: -5px; width: 253px; height: 28px; }
.m4 { left: -122px; top: -4px; width: 255px; height: 33px; }
.actions { display: flex; justify-content: center; gap: 2px; margin-top: 8px; }
.act { display: flex; align-items: center; height: 16px; padding: 0 3px; border: 1px solid #5c94e3; border-radius: 2px; background: linear-gradient(#d6e8ff, #8db9fb); }
.drop { display: flex; align-items: center; height: 10px; margin-left: 4px; padding-left: 4px; border-left: 1px solid #8db0e6; }
.drop::before { content: ""; border: solid transparent; border-width: 3px 3px 0; border-top-color: #000; }

.status { display: flex; gap: 2px; height: 18px; margin-top: 3px; font-size: 11px; }
.cell { display: flex; align-items: center; gap: 4px; border: 1px solid; border-color: #808080 #fff #fff #808080; white-space: nowrap; }
.grow { flex: 1; }
.s { width: 22px; }
.zone { width: 250px; }
.lockc { width: 35px; padding-left: 3px; }
.zoomc { width: 92px; padding-left: 4px; gap: 3px; }
.car { margin-left: 4px; border: solid transparent; border-width: 3px 3px 0; border-top-color: #000; }
.car.end { margin: 0 8px 0 auto; }
.grip { align-self: flex-end; }

.taskbar { display: flex; align-items: center; height: 44px; padding: 0 2px; border-top: 1px solid #fff; font-size: 11px; }
.start { display: flex; align-items: center; gap: 1px; width: 52px; height: 38px; padding-left: 1px; border: 1px solid; border-width: 1px 2px 2px 1px; border-color: #fff #404040 #404040 #fff; font-weight: bold; }
.launch { display: flex; gap: 2px; margin-left: 9px; }
.q { width: 48px; height: 38px; display: grid; place-items: center; }
.q.on { background: #fff; border: 1px solid; border-width: 2px 1px 1px 2px; border-color: #404040 #fff #fff #404040; }
.q.up { border: 1px solid; border-width: 1px 2px 2px 1px; border-color: #fff #404040 #404040 #fff; }
.q.putty { width: 41px; }
.stack { width: 2px; border-right: 2px solid #404040; }
.lang { margin-left: auto; padding: 12px 5px 12px 0; border-right: 1px solid #808080; }
.tray { display: flex; align-items: center; gap: 8px; height: 38px; margin-left: 3px; padding: 0 1px 0 5px; border: 1px solid; border-color: #808080 #fff #fff #808080; }
.clock { display: flex; flex-direction: column; align-items: center; width: 60px; line-height: 16px; }
```
